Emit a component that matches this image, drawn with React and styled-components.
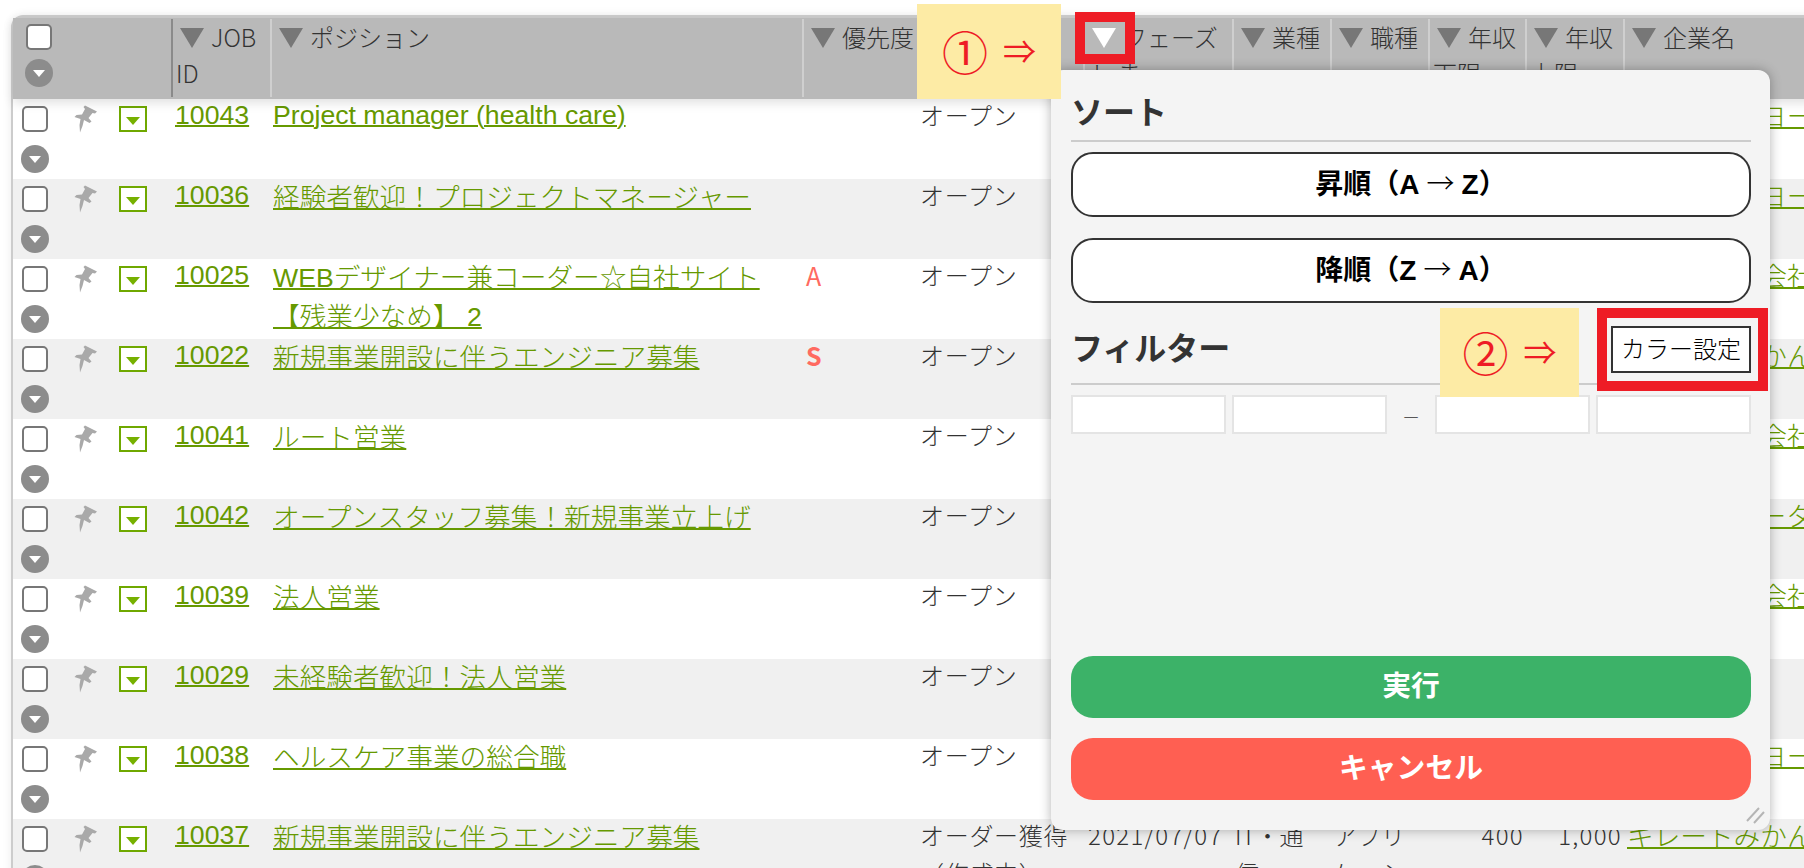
import React from 'react'
import styled, { createGlobalStyle } from 'styled-components'

const GlobalStyle = createGlobalStyle`
    html, body {
        margin: 0;
        padding: 0;
        background: #fff;
        overflow: hidden;
    }
    * {
        box-sizing: border-box;
    }
`

const Page = styled.div`
    position: relative;
    width: 1804px;
    height: 868px;
    overflow: hidden;
    padding: 15px 0 0 11px;
    font-family: "Noto Sans CJK JP", "Liberation Sans", sans-serif;
    font-weight: 300;
    font-size: 24px;
    line-height: 38px;
    color: #333;
`

const Table = styled.div`
    width: 1900px;
    border-top: 3px solid #ccc;
    border-left: 2px solid #ccc;
    border-top-left-radius: 12px;
    box-shadow: 0 0 10px rgba(0, 0, 0, 0.08);
`

const HeadRow = styled.div`
    position: relative;
    z-index: 1;
    display: flex;
    height: 81px;
    background: #b9b9b9;
    box-shadow: 0 4px 10px rgba(0, 0, 0, 0.12);
`

const HeadCell = styled.div`
    flex: 0 0 ${(p) => p.$w}px;
    height: 78px;
    margin-top: 1px;
    padding-left: 3px;
    border-left: 2px solid ${(p) => (p.$dark ? '#8a8a8a' : '#cfcfcf')};
    line-height: 36px;
    overflow: hidden;
`

const HeadTools = styled.div`
    flex: 0 0 158px;
    padding: 6px 0 0 13px;
`

const Sort = styled.span`
    display: inline-block;
    width: 0;
    height: 0;
    margin: 0 7px 0 4px;
    border-style: solid;
    border-width: 20px 12.5px 0;
    border-color: ${(p) => (p.$on ? '#fff' : '#777')} transparent transparent;
    vertical-align: -1px;
`

const Row = styled.div`
    display: flex;
    height: 80px;
    background: ${(p) => (p.$odd ? '#f0f0f0' : '#fff')};
`

const Cell = styled.div`
    flex: 0 0 ${(p) => p.$w}px;
    height: 84px;
    margin-top: -${(p) => p.$up ?? 3}px;
    padding: 0 ${(p) => (p.$right ? '1px' : '3px')} 0 ${(p) => p.$pad || 3}px;
    text-align: ${(p) => (p.$right ? 'right' : 'left')};
    letter-spacing: ${(p) => p.$track || 0}px;
    overflow: hidden;
`

const Tools = styled.div`
    flex: 0 0 158px;
    padding-left: 9px;
`

const ToolLine = styled.div`
    display: flex;
    align-items: center;
    height: 40px;
`

const Check = styled.input.attrs({ type: 'checkbox' })`
    appearance: none;
    display: block;
    width: 26px;
    height: 26px;
    margin: 0;
    background: #fff;
    border: 2px solid #777;
    border-radius: 5px;
`

const PinIcon = styled.svg`
    flex: 0 0 24px;
    width: 24px;
    height: 28px;
    margin-left: 26px;
    fill: #a9a9a9;
    filter: blur(0.4px);
`

const MenuBox = styled.span`
    display: flex;
    justify-content: center;
    align-items: flex-end;
    width: 28px;
    height: 26px;
    margin-left: 21px;
    padding-bottom: 5px;
    border: 2px solid #6fa800;
    background: #fff;

    &::after {
        content: "";
        border-style: solid;
        border-width: 8px 7.5px 0;
        border-color: #76b000 transparent transparent;
    }
`

const Round = styled.span`
    display: flex;
    justify-content: center;
    align-items: center;
    width: 28px;
    height: 28px;
    margin: ${(p) => (p.$head ? '9px 0 0 -1px' : '6px 0 0 -1px')};
    border-radius: 50%;
    background: #8c8c8c;

    &::after {
        content: "";
        border-style: solid;
        border-width: 7px 6px 0;
        border-color: #fff transparent transparent;
    }
`

const JobLink = styled.a`
    font-family: "Liberation Sans", "Noto Sans CJK JP", sans-serif;
    font-size: 26.67px;
    color: #669900;
    text-decoration: underline;
    text-decoration-thickness: 2px;
`

const Priority = styled.span`
    color: #ff6a60;
    font-size: 25px;
    font-weight: ${(p) => (p.$bold ? 700 : 400)};
`

const Popup = styled.div`
    position: absolute;
    z-index: 2;
    top: 70px;
    left: 1051px;
    display: flex;
    flex-direction: column;
    width: 719px;
    height: 760px;
    padding: 0 19px 30px 20px;
    background: #f4f4f4;
    border-radius: 12px;
    box-shadow: 0 0 12px rgba(0, 0, 0, 0.3);
`

const SortTitle = styled.div`
    display: flex;
    align-items: flex-end;
    height: 72px;
    padding-bottom: 7px;
    border-bottom: 2px solid #ccc;
    font-size: 32px;
    font-weight: 700;
    line-height: 46px;
    color: #333;
`

const OrderButton = styled.button`
    display: block;
    width: 100%;
    height: 65px;
    margin-top: ${(p) => p.$top}px;
    padding: 0 0 5px;
    background: #fff;
    border: 2px solid #333;
    border-radius: 22px;
    font-family: "Liberation Sans", "Noto Sans CJK JP", sans-serif;
    font-size: 28px;
    font-weight: 700;
    color: #000;
`

const Arrow = styled.span`
    margin: 0 7px;
    font-family: "Noto Sans CJK JP", sans-serif;
    font-weight: 300;
`

const FilterHead = styled.div`
    display: flex;
    justify-content: space-between;
    align-items: center;
    height: 82px;
    padding-top: 13px;
    border-bottom: 2px solid #ccc;
    color: #333;
`

const FilterTitle = styled.span`
    margin-bottom: 7px;
    font-size: 32px;
    font-weight: 700;
`

const ColorButton = styled.button`
    width: 140px;
    height: 47px;
    padding: 0 0 5px;
    background: #fff;
    border: 2px solid #333;
    font-family: inherit;
    font-size: 24px;
    font-weight: 300;
    color: #000;
`

const Fields = styled.div`
    display: flex;
    align-items: center;
    gap: 6px;
    margin-top: 10px;
`

const Field = styled.input`
    flex: 0 0 155px;
    width: 155px;
    height: 39px;
    background: #fff;
    border: 2px solid #e4e4e4;
`

const Dash = styled.span`
    flex: 0 0 36px;
    font-size: 17px;
    text-align: center;
`

const RunButton = styled.button`
    display: block;
    width: 100%;
    height: 62px;
    margin-top: ${(p) => p.$top};
    padding: 0 0 7px;
    background: ${(p) => p.$bg};
    border: 0;
    border-radius: 22px;
    font-family: inherit;
    font-size: 28.8px;
    font-weight: 700;
    color: #fff;
`

const Grip = styled.svg`
    position: absolute;
    right: 4px;
    bottom: 4px;
    width: 22px;
    height: 22px;
`

const Note = styled.div`
    position: absolute;
    z-index: 3;
    top: ${(p) => p.$top}px;
    left: ${(p) => p.$left}px;
    display: flex;
    justify-content: center;
    align-items: center;
    gap: 15px;
    width: ${(p) => p.$w}px;
    height: ${(p) => p.$h}px;
    padding-bottom: 4px;
    background: #fdeba5;
    font-size: 46px;
    font-weight: 400;
    color: #ee1c25;
`

const NoteArrow = styled.span`
    font-size: 33px;
`

const Frame = styled.div`
    position: absolute;
    z-index: 3;
    top: ${(p) => p.$top}px;
    left: ${(p) => p.$left}px;
    width: ${(p) => p.$w}px;
    height: ${(p) => p.$h}px;
    border: 10px solid #ee1c25;
`

const columns = [99, 532, 115, 166, 149, 98, 98, 97, 98, 281]

const headers = [
    ['JOB ID', true],
    ['ポジション'],
    ['優先度'],
    ['進捗状況'],
    ['フェーズ ト ま', false, true],
    ['業種'],
    ['職種'],
    ['年収下限［万円］'],
    ['年収上限［万円］'],
    ['企業名'],
]

const jobs = [
    { id: 10043, title: 'Project manager (health care)', latin: true, company: 'グローバルヨーク' },
    { id: 10036, title: '経験者歓迎！プロジェクトマネージャー', company: 'グローバルヨーク' },
    { id: 10025, title: 'WEBデザイナー兼コーダー☆自社サイト【残業少なめ】 2', priority: 'A', company: 'テスト株式会社' },
    { id: 10022, title: '新規事業開設に伴うエンジニア募集', priority: 'S', company: 'キレートみかん' },
    { id: 10041, title: 'ルート営業', company: 'テスト株式会社' },
    { id: 10042, title: 'オープンスタッフ募集！新規事業立上げ', company: 'システムデータ' },
    { id: 10039, title: '法人営業', company: 'テスト株式会社' },
    { id: 10029, title: '未経験者歓迎！法人営業', company: 'テスト' },
    { id: 10038, title: 'ヘルスケア事業の総合職', company: 'グローバルヨーク' },
    {
        id: 10037,
        title: '新規事業開設に伴うエンジニア募集',
        status: 'オーダー獲得（作成中）',
        date: '2021/07/07',
        industry: 'IT・通信',
        occupation: 'アプリケーション',
        min: '400',
        max: '1,000',
        company: 'キレートみかん',
    },
]

const Pin = () => (
    <PinIcon viewBox="0 0 24 28">
        <path d="M11 .5 23 6.5 21 8.5 18.5 8 14.5 13 17.5 16.5 15.5 18 10 15 8.5 21 6 27.5 5.5 20 6.5 14 .5 12 2.5 10 8 9.5 11 4 9.5 2Z" />
    </PinIcon>
)

function JobRow({ job, odd }) {
    return (
        <Row $odd={odd}>
            <Tools>
                <ToolLine>
                    <Check />
                    <Pin />
                    <MenuBox />
                </ToolLine>
                <Round />
            </Tools>
            <Cell $w={columns[0]} $pad={4} $up={4}><JobLink>{job.id}</JobLink></Cell>
            <Cell $w={columns[1]} $up={job.latin ? 4 : 1}><JobLink>{job.title}</JobLink></Cell>
            <Cell $w={columns[2]} $pad={4}>
                {job.priority && <Priority $bold={job.priority === 'S'}>{job.priority}</Priority>}
            </Cell>
            <Cell $w={columns[3]} $track={0.7}>{job.status || 'オープン'}</Cell>
            <Cell $w={columns[4]} $pad={5} $track={1.3}>{job.date}</Cell>
            <Cell $w={columns[5]}>{job.industry}</Cell>
            <Cell $w={columns[6]}>{job.occupation}</Cell>
            <Cell $w={columns[7]} $right $track={1.3}>{job.min}</Cell>
            <Cell $w={columns[8]} $right $track={1.3}>{job.max}</Cell>
            <Cell $w={columns[9]} $pad={4} $up={2}><JobLink>{job.company}</JobLink></Cell>
        </Row>
    )
}

export default function App() {
    return (
        <Page>
            <GlobalStyle />
            <Table>
                <HeadRow>
                    <HeadTools>
                        <Check />
                        <Round $head />
                    </HeadTools>
                    {headers.map(([label, dark, on], i) => (
                        <HeadCell key={label} $w={columns[i]} $dark={dark}>
                            <Sort $on={on} />{label}
                        </HeadCell>
                    ))}
                </HeadRow>
                {jobs.map((job, i) => (
                    <JobRow key={job.id} job={job} odd={i % 2 === 1} />
                ))}
            </Table>

            <Popup>
                <SortTitle>ソート</SortTitle>
                <OrderButton $top={10}>昇順（A<Arrow>→</Arrow>Z）</OrderButton>
                <OrderButton $top={21}>降順（Z<Arrow>→</Arrow>A）</OrderButton>
                <FilterHead>
                    <FilterTitle>フィルター</FilterTitle>
                    <ColorButton>カラー設定</ColorButton>
                </FilterHead>
                <Fields>
                    <Field />
                    <Field />
                    <Dash>—</Dash>
                    <Field />
                    <Field />
                </Fields>
                <RunButton $bg="#3cb268" $top="auto">実行</RunButton>
                <RunButton $bg="#ff5f52" $top="20px">キャンセル</RunButton>
                <Grip viewBox="0 0 22 22">
                    <path d="M3 17 L15 4 M10 19 L20 8" stroke="#b5b5b5" strokeWidth="2" />
                </Grip>
            </Popup>

            <Note $top={4} $left={917} $w={144} $h={95}>①<NoteArrow>⇒</NoteArrow></Note>
            <Frame $top={12} $left={1075} $w={60} $h={52} />
            <Note $top={308} $left={1440} $w={139} $h={89}>②<NoteArrow>⇒</NoteArrow></Note>
            <Frame $top={308} $left={1597} $w={171} $h={83} />
        </Page>
    )
}
